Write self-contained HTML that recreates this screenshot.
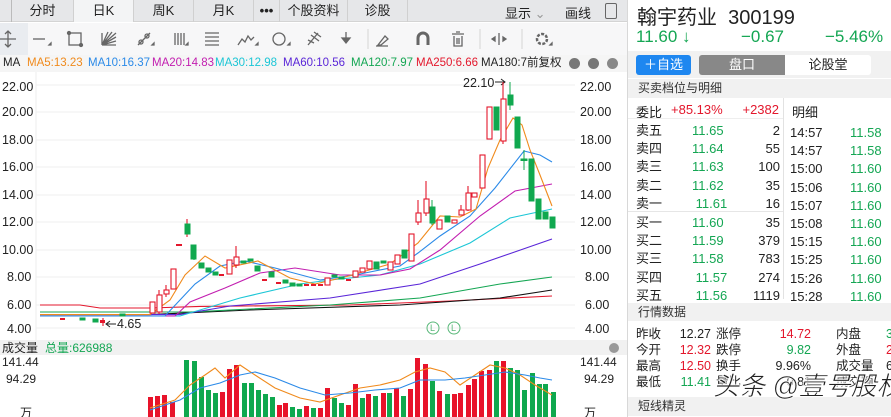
<!DOCTYPE html>
<html><head><meta charset="utf-8"><style>
*{margin:0;padding:0;box-sizing:border-box}
body{width:891px;height:417px;overflow:hidden;background:#fff;font-family:"Liberation Sans","Noto Sans CJK SC",sans-serif;position:relative;color:#222}
.a{position:absolute;white-space:nowrap}
.tabs{left:0;top:0;width:627px;height:22px;background:#e6e7e9;border-bottom:1px solid #d4d4d4}
.tab{position:absolute;top:0;height:22px;line-height:22px;font-size:13px;text-align:center;border-right:1px solid #d0d0d0}
.g{color:#14a653}.r{color:#e3172c}
.rp{font-size:13px}
.hdr{background:#f1f1f1;color:#333;font-size:12px;padding-left:10px;line-height:18px}
</style></head><body>
<div class="a tabs">
 <div class="tab" style="left:0;width:12px;border-right:1px solid #bbb"></div>
 <div class="tab" style="left:12px;width:62px">分时</div>
 <div class="tab" style="left:74px;width:60px;background:#f3f4f5">日K</div>
 <div class="tab" style="left:134px;width:60px">周K</div>
 <div class="tab" style="left:194px;width:60px">月K</div>
 <div class="tab" style="left:254px;width:26px;font-weight:bold">•••</div>
 <div class="tab" style="left:280px;width:68px">个股资料</div>
 <div class="tab" style="left:348px;width:60px">诊股</div>
 <div class="a" style="left:505px;top:3px;font-size:13px">显示 <span style="color:#999">⌄</span></div>
 <div class="a" style="left:565px;top:3px;font-size:13px">画线</div>
 <div class="a" style="left:605px;top:3px;width:12px;height:16px;border:1.5px solid #666;border-radius:2px"></div>
</div>
<div class="a" style="left:0;top:23px;width:627px;height:32px;background:#f7f7f8"></div>
<div class="a" style="left:0;top:23px;width:28px;height:32px;background:#e9ecf0"></div>
<svg class="a" style="left:0;top:23px" width="627" height="32" stroke="#666" fill="none" stroke-width="1.3">
 <path d="M8 8v16M0 16h16M5 11l3-3 3 3M5 21l3 3 3-3"/>
 <path d="M33 16h12"/><path d="M49 22l2-2v2z" fill="#666"/>
 <rect x="69" y="10" width="12" height="12"/><circle cx="69" cy="10" r="1.5" fill="#666"/><circle cx="81" cy="22" r="1.5" fill="#666"/>
 <path d="M102 22l14-12M102 22l14-8M102 22l14-4M102 22l14 0M102 22l10-13M102 22l6-13M102 10v12"/>
 <path d="M138 22l12-12"/><circle cx="141" cy="19" r="2"/><circle cx="147" cy="13" r="2"/><path d="M152 22l2-2v2z" fill="#666"/>
 <path d="M175 10v12M178 10v12M181 10v12M184 10v12"/><path d="M186 22l2-2v2z" fill="#666"/>
 <path d="M205 10h14M205 14h14M205 18h14M205 22h14"/>
 <path d="M238 22l4-6 3 3 3-6 3 4 3-3"/><path d="M256 22l2-2v2z" fill="#666"/>
 <circle cx="279" cy="16" r="6"/><path d="M288 22l2-2v2z" fill="#666"/>
 <path d="M308 22l10-12M311 12l8 6M314 9l7 5M308 17l6 3"/>
 <path d="M346 9v9M342 15l4 5 4-5z" fill="#666"/>
 <path d="M368 6v20" stroke="#ddd"/>
 <path d="M378 22l7-9 3 3-7 6zM376 23h12"/>
 <path d="M418 22v-7a5 5 0 0 1 10 0v7" stroke-width="3"/>
 <path d="M452 11h12M456 9h4M454 13v10h8v-10M457 15v6M459 15v6"/>
 <path d="M480 6v20" stroke="#ddd"/>
 <path d="M499 10v12M492 16l3-2v4zM506 16l-3-2v4z" fill="#666"/>
 <path d="M522 6v20" stroke="#ddd"/>
 <circle cx="542" cy="16" r="5" stroke-width="2.5" stroke-dasharray="3 1.5"/><path d="M550 22l2-2v2z" fill="#666"/>
</svg>
<div class="a" style="left:0;top:55px;width:627px;height:17px;background:#f5f5f5;font-size:11.5px;line-height:17px">
 <span class="a" style="left:3px">MA</span>
 <span class="a" style="left:27px;color:#f08a1c">MA5:13.23</span>
 <span class="a" style="left:88px;color:#2b8ae8">MA10:16.37</span>
 <span class="a" style="left:152px;color:#c21eb0">MA20:14.83</span>
 <span class="a" style="left:215px;color:#1cc6d6">MA30:12.98</span>
 <span class="a" style="left:283px;color:#5a26d8">MA60:10.56</span>
 <span class="a" style="left:351px;color:#14a653">MA120:7.97</span>
 <span class="a" style="left:416px;color:#e3172c">MA250:6.66</span>
 <span class="a" style="left:481px">MA180:7前复权</span>
 <span class="a" style="left:569px;top:3px;width:11px;height:11px;border-radius:50%;background:#777"></span>
 <span class="a" style="left:588px;top:3px;width:11px;height:11px;border-radius:50%;background:#777"></span>
 <span class="a" style="left:607px;top:3px;width:11px;height:11px;border-radius:50%;background:#888"></span>
</div>
<svg class="a" style="left:0;top:72px" width="627" height="345" viewBox="0 72 627 345" font-family="Liberation Sans" font-size="12.5">
 <g stroke="#efefef"><path d="M36 85H575M36 112H575M36 140H575M36 167H575M36 195H575M36 222H575M36 250H575M36 277H575M36 305H575M36 328H575"/></g>
 <path d="M36 72V340" stroke="#eee"/>
 <g fill="#222"><text x="2" y="91">22.00</text><text x="2" y="116">20.00</text><text x="2" y="144">18.00</text><text x="2" y="171">16.00</text><text x="2" y="199">14.00</text><text x="2" y="226">12.00</text><text x="2" y="254">10.00</text><text x="7" y="281">8.00</text><text x="7" y="309">6.00</text><text x="7" y="333">4.00</text>
 <text x="580" y="91">22.00</text><text x="580" y="116">20.00</text><text x="580" y="144">18.00</text><text x="580" y="171">16.00</text><text x="580" y="199">14.00</text><text x="580" y="226">12.00</text><text x="580" y="254">10.00</text><text x="585" y="281">8.00</text><text x="585" y="309">6.00</text><text x="585" y="333">4.00</text>
 <text x="463" y="87">22.10</text><text x="117" y="328">4.65</text></g>
 <path d="M495 82h10M501 79l4 3-4 3M106 324h10M110 321l-4 3 4 3" stroke="#222" fill="none"/>
 <g fill="none" stroke-width="1.1">
 <polyline stroke="#e3172c" points="40,305 80,305 100,308 150,308 200,306.4 350,305 450,301 552,296"/>
 <polyline stroke="#111" points="40,314.6 150,314.6 250,310 400,305 500,298 552,290"/>
 <polyline stroke="#14a653" points="40,312 190,312 330,305 420,298 500,284 552,277"/>
 <polyline stroke="#5a26d8" points="40,314.6 180,314.6 230,306 330,298 420,284 480,264 552,239"/>
 <polyline stroke="#1cc6d6" points="40,316 180,316 240,298 300,284 330,280 380,275 420,264 470,243 510,218 552,209"/>
 <polyline stroke="#c21eb0" points="40,316 175,316 190,302 225,288 260,273 295,268 340,275 380,275 410,269 440,250 480,216 515,191 552,184"/>
 <polyline stroke="#2b8ae8" points="40,316 165,316 180,300 195,284 220,266 245,261 275,268 320,280 355,275 400,266 418,253 440,236 470,216 495,188 524,151 540,155 552,162"/>
 <polyline stroke="#f08a1c" points="40,314.6 150,314.6 170,300 185,275 205,256 225,268 258,261 290,278 315,284 345,277 390,264 418,243 440,216 460,217 476,209 488,168 500,140 513,118 522,125 530,150 540,175 552,206"/>
 </g>
 <g stroke="#e3172c" fill="#fff" stroke-width="1.1">
 <path d="M103 318v8M159 290v24M166 285v12M187 219v18M236 246v22M418 200v25M426 181v35M461 205v10M468 186v25M503 82v62"/>
 <rect x="150" y="302" width="5" height="11"/><rect x="157" y="295" width="5" height="17"/><rect x="164" y="290" width="5" height="4"/><rect x="171" y="269" width="5" height="20"/>
 <rect x="227" y="260" width="5" height="14"/><rect x="234" y="257" width="5" height="8"/><rect x="325" y="278" width="5" height="7"/>
 <rect x="353" y="271" width="5" height="6"/><rect x="360" y="268" width="5" height="4"/><rect x="367" y="261" width="5" height="8"/><rect x="388" y="262" width="5" height="8"/><rect x="395" y="255" width="5" height="9"/>
 <rect x="409" y="234" width="5" height="27"/><rect x="416" y="213" width="5" height="9"/><rect x="424" y="199" width="5" height="14"/><rect x="437" y="220" width="5" height="9"/>
 <rect x="452" y="220" width="5" height="3"/><rect x="459" y="210" width="5" height="5"/><rect x="466" y="193" width="5" height="17"/><rect x="472" y="193" width="5" height="4"/>
 <rect x="480" y="155" width="5" height="33"/><rect x="487" y="107" width="5" height="32"/><rect x="501" y="99" width="5" height="42"/>
 </g>
 <g fill="#e3172c"><rect x="176" y="244" width="6" height="2"/><rect x="219" y="274" width="5" height="2"/><rect x="262" y="279" width="5" height="2"/><rect x="276" y="282" width="5" height="2"/><rect x="304" y="284" width="5" height="2"/><rect x="311" y="284" width="5" height="2"/><rect x="318" y="284" width="5" height="2"/><rect x="346" y="279" width="5" height="2"/><rect x="100" y="320" width="5" height="3"/><rect x="60" y="318" width="5" height="2"/></g>
 <g fill="#10a84f" stroke="#10a84f">
 <path d="M510 82v28M432 200v25M524 150v20M194 246v14"/>
 <rect x="185" y="224" width="5" height="10"/><rect x="191" y="245" width="5" height="14"/><rect x="199" y="263" width="5" height="5"/><rect x="206" y="268" width="5" height="4"/><rect x="213" y="272" width="5" height="3"/>
 <rect x="241" y="261" width="5" height="2"/><rect x="248" y="259" width="5" height="2"/><rect x="255" y="266" width="5" height="5"/><rect x="269" y="272" width="5" height="5"/><rect x="283" y="280" width="5" height="3"/><rect x="290" y="283" width="5" height="3"/><rect x="297" y="284" width="5" height="2"/>
 <rect x="332" y="275" width="5" height="2"/><rect x="339" y="277" width="5" height="2"/><rect x="374" y="262" width="5" height="7"/><rect x="381" y="261" width="5" height="2"/><rect x="402" y="250" width="5" height="8"/>
 <rect x="430" y="207" width="5" height="16"/><rect x="445" y="216" width="5" height="6"/><rect x="494" y="107" width="5" height="23"/><rect x="508" y="95" width="5" height="10"/>
 <rect x="515" y="117" width="5" height="31"/><rect x="521" y="159" width="6" height="1.5"/><rect x="529" y="159" width="5" height="42"/><rect x="536" y="199" width="5" height="20"/><rect x="543" y="212" width="5" height="7"/><rect x="550" y="217" width="5" height="11"/>
 <rect x="80" y="318" width="5" height="2"/><rect x="93" y="319" width="5" height="3"/><rect x="120" y="314" width="5" height="2"/>
 </g>
 <g fill="none" stroke="#5ab87a"><circle cx="433" cy="328" r="6"/><circle cx="454" cy="328" r="6"/></g>
 <g fill="#5ab87a" font-size="9"><text x="430" y="331">L</text><text x="451" y="331">L</text></g>
 <rect x="0" y="340" width="627" height="15" fill="#f1f1f1"/>
 <text x="2" y="352" font-size="12" fill="#222">成交量</text><text x="45" y="352" font-size="12" fill="#14a653">总量:626988</text>
 <circle cx="614" cy="348" r="5" fill="#999"/>
 <g fill="#222" font-size="12"><text x="2" y="366">141.44</text><text x="6" y="383">94.29</text><text x="20" y="417">万</text><text x="580" y="366">141.44</text><text x="584" y="383">94.29</text><text x="584" y="417">万</text></g>
 <g fill="#e8132a">
 <rect x="148" y="397" width="5" height="20"/><rect x="155" y="396" width="5" height="21"/><rect x="162" y="395" width="5" height="22"/><rect x="170" y="402" width="5" height="15"/>
 <rect x="220" y="392" width="5" height="25"/><rect x="227" y="369" width="5" height="48"/><rect x="234" y="365" width="5" height="52"/>
 <rect x="277" y="405" width="5" height="12"/><rect x="283" y="403" width="5" height="14"/><rect x="304" y="406" width="5" height="11"/><rect x="318" y="408" width="5" height="9"/><rect x="325" y="388" width="5" height="29"/>
 <rect x="346" y="405" width="5" height="12"/><rect x="353" y="384" width="5" height="33"/><rect x="366" y="394" width="5" height="23"/><rect x="381" y="393" width="5" height="24"/><rect x="394" y="388" width="5" height="29"/><rect x="408" y="389" width="5" height="28"/>
 <rect x="415" y="358" width="5" height="59"/><rect x="423" y="364" width="5" height="53"/><rect x="437" y="391" width="5" height="26"/><rect x="452" y="394" width="5" height="23"/><rect x="458" y="393" width="5" height="24"/>
 <rect x="466" y="385" width="5" height="32"/><rect x="472" y="379" width="5" height="38"/><rect x="479" y="371" width="5" height="46"/><rect x="487" y="370" width="5" height="47"/><rect x="501" y="361" width="5" height="56"/>
 </g>
 <g fill="#0fa84e">
 <rect x="184" y="360" width="5" height="57"/><rect x="192" y="361" width="5" height="56"/><rect x="199" y="377" width="5" height="40"/><rect x="206" y="390" width="5" height="27"/><rect x="213" y="393" width="5" height="24"/>
 <rect x="242" y="383" width="5" height="34"/><rect x="249" y="383" width="5" height="34"/><rect x="256" y="390" width="5" height="27"/><rect x="263" y="394" width="5" height="23"/><rect x="270" y="397" width="5" height="20"/>
 <rect x="290" y="407" width="5" height="10"/><rect x="297" y="409" width="5" height="8"/><rect x="311" y="408" width="5" height="9"/><rect x="332" y="398" width="5" height="19"/><rect x="339" y="403" width="5" height="14"/>
 <rect x="360" y="398" width="5" height="19"/><rect x="373" y="396" width="5" height="21"/><rect x="387" y="393" width="5" height="24"/><rect x="401" y="396" width="5" height="21"/><rect x="430" y="381" width="5" height="36"/><rect x="445" y="394" width="5" height="23"/>
 <rect x="494" y="361" width="5" height="56"/><rect x="508" y="368" width="5" height="49"/><rect x="515" y="370" width="5" height="47"/><rect x="522" y="390" width="5" height="27"/><rect x="530" y="373" width="5" height="44"/><rect x="537" y="384" width="5" height="33"/><rect x="543" y="384" width="5" height="33"/><rect x="551" y="392" width="5" height="25"/>
 </g>
 <g fill="none" stroke-width="1.1">
 <polyline stroke="#f08a1c" points="150,408 175,400 190,385 205,375 215,368 225,378 240,365 255,375 275,388 300,398 320,402 340,395 360,388 380,385 400,380 415,372 430,368 445,372 460,385 475,375 490,365 505,368 520,375 535,385 552,395"/>
 <polyline stroke="#2b8ae8" points="150,410 180,400 200,388 220,383 240,375 255,372 275,378 300,388 325,395 350,393 375,390 400,388 420,380 445,380 465,378 485,375 505,372 525,375 540,378 552,380"/>
 </g>
</svg>
<!-- right panel -->
<div class="a" style="left:627px;top:0;width:264px;height:417px;border-left:1px solid #d8d8d8;background:#fff"></div>
<div class="a" style="left:637px;top:1px;font-size:20px;color:#222">翰宇药业&nbsp; 300199</div>
<div class="a g" style="left:636px;top:27px;font-size:17px">11.60 ↓</div>
<div class="a g" style="left:741px;top:27px;font-size:17px">−0.67</div>
<div class="a g" style="left:825px;top:27px;font-size:17px">−5.46%</div>
<div class="a" style="left:628px;top:51px;width:263px;height:27px;background:#f1f1f1"></div>
<div class="a" style="left:636px;top:55px;width:55px;height:20px;background:#1e87f0;border-radius:3px;color:#fff;font-size:13px;text-align:center;line-height:20px">＋自选</div>
<div class="a" style="left:699px;top:55px;width:86px;height:20px;background:#888;border-radius:3px 0 0 3px;color:#fff;font-size:13px;text-align:center;line-height:20px">盘口</div>
<div class="a" style="left:785px;top:55px;width:86px;height:20px;background:#fff;border-radius:0 3px 3px 0;font-size:13px;text-align:center;line-height:20px">论股堂</div>
<div class="a hdr" style="left:628px;top:79px;width:263px;height:19px">买卖档位与明细</div>
<div class="a" style="left:783px;top:98px;width:1px;height:201px;background:#e2e2e2"></div>
<div class="a rp" style="left:636px;top:102px">委比</div>
<div class="a rp r" style="left:671px;top:102px">+85.13%</div>
<div class="a rp r" style="left:739px;top:102px;width:40px;text-align:right">+2382</div>
<div class="a rp" style="left:792px;top:102px">明细</div>
<div class="a" style="left:628px;top:118px;width:155px;height:1px;background:#eee"></div>
<div class="a" style="left:628px;top:211px;width:155px;height:1px;background:#e6e6e6"></div>
<div class="a rp" style="left:636px;top:122px;line-height:18.2px">卖五<br>卖四<br>卖三<br>卖二<br>卖一</div>
<div class="a rp g" style="left:692px;top:122px;line-height:18.2px">11.65<br>11.64<br>11.63<br>11.62<br>&nbsp;11.61</div>
<div class="a rp" style="left:740px;top:122px;line-height:18.2px;width:40px;text-align:right">2<br>55<br>100<br>35<br>16</div>
<div class="a rp" style="left:636px;top:214px;line-height:18.2px">买一<br>买二<br>买三<br>买四<br>买五</div>
<div class="a rp g" style="left:692px;top:214px;line-height:18.2px">11.60<br>11.59<br>11.58<br>&nbsp;11.57<br>&nbsp;11.56</div>
<div class="a rp" style="left:740px;top:214px;line-height:18.2px;width:40px;text-align:right">35<br>379<br>783<br>274<br>1119</div>
<div class="a rp" style="left:790px;top:124px;line-height:18.2px">14:57<br>14:57<br>15:00<br>15:06<br>15:07<br>15:08<br>15:15<br>15:25<br>15:26<br>15:28</div>
<div class="a rp g" style="left:850px;top:124px;line-height:18.2px">11.58<br>11.58<br>11.60<br>11.60<br>11.60<br>11.60<br>11.60<br>11.60<br>11.60<br>11.60</div>
<div class="a hdr" style="left:628px;top:303px;width:263px;height:18px">行情数据</div>
<div class="a" style="left:636px;top:326px;font-size:12.5px;line-height:16px">昨收<br>今开<br>最高<br>最低</div>
<div class="a" style="left:670px;top:326px;font-size:12.5px;line-height:16px;width:41px;text-align:right">12.27<br><span class="r">12.32</span><br><span class="r">12.50</span><br><span class="g">11.41</span></div>
<div class="a" style="left:716px;top:326px;font-size:12.5px;line-height:16px">涨停<br>跌停<br>换手<br>量比</div>
<div class="a" style="left:750px;top:326px;font-size:12.5px;line-height:16px;width:61px;text-align:right"><span class="r">14.72</span><br><span class="g">9.82</span><br>9.96%<br>0.81</div>
<div class="a" style="left:836px;top:326px;font-size:12.5px;line-height:16px">内盘<br>外盘<br>成交量<br>成交额</div>
<div class="a" style="left:886px;top:326px;font-size:12.5px;line-height:16px"><span class="g">3</span><br><span class="r">2</span><br>6</div>
<div class="a hdr" style="left:628px;top:397px;width:263px;height:19px">短线精灵</div>
<div class="a" style="left:713px;top:366px;font-size:26px;color:#222;font-style:italic;-webkit-text-stroke:0.6px #fff;text-shadow:0 0 2px #fff,0 0 2px #fff">头条 @壹号股权</div>
</body></html>
